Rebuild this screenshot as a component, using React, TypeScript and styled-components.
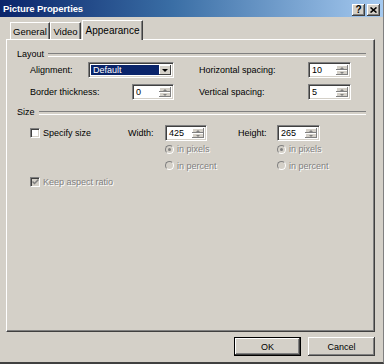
import React from "react";
import styled, { createGlobalStyle, css } from "styled-components";

const Global = createGlobalStyle`
  html, body { margin: 0; padding: 0; background: #d4d0c8; }
  body { font-family: "Liberation Sans", Arial, sans-serif; font-size: 9px; color: #000; }
  * { box-sizing: border-box; }
`;

const Window = styled.div`
  width: 384px;
  height: 364px;
  background: #d4d0c8;
  display: flex;
  flex-direction: column;
  border-right: 1px solid #808080;
  border-bottom: 2px solid #404040;
  overflow: hidden;
`;

const TitleBar = styled.div`
  height: 17px;
  flex: none;
  display: flex;
  align-items: center;
  justify-content: space-between;
  padding: 0 3px 0 3px;
  background: linear-gradient(to right, #0a246a 0%, #3a6ea5 45%, #a6caf0 100%);
`;

const Title = styled.span`
  color: #fff;
  font-weight: bold;
  font-size: 9.5px;
  letter-spacing: -0.1px;
`;

const TitleButtons = styled.div`
  display: flex;
  gap: 2px;
  margin-top: 2px;
`;

const CaptionButton = styled.div`
  width: 13px;
  height: 12px;
  background: #d4d0c8;
  box-shadow: inset -1px -1px #404040, inset 1px 1px #fff, inset -2px -2px #808080;
  display: flex;
  align-items: center;
  justify-content: center;
  font-weight: bold;
  font-size: 10px;
  line-height: 1;
  color: #000;
`;

const Body = styled.div`
  flex: 1;
  display: flex;
  flex-direction: column;
  padding: 3px 8px 0 6px;
`;

const TabRow = styled.div`
  height: 19px;
  display: flex;
  align-items: flex-end;
  padding-left: 4px;
  position: relative;
  z-index: 1;
`;

const Tab = styled.div<{ $active?: boolean; $w: number }>`
  width: ${(p) => p.$w}px;
  height: ${(p) => (p.$active ? 20 : 17)}px;
  margin-bottom: ${(p) => (p.$active ? -1 : 0)}px;
  margin-left: ${(p) => (p.$active ? 1 : 0)}px;
  background: #d4d0c8;
  border-top: 1px solid #fff;
  border-left: 1px solid #fff;
  border-right: 1px solid #404040;
  box-shadow: inset -1px 0 #808080;
  display: flex;
  align-items: center;
  justify-content: center;
  padding-top: ${(p) => (p.$active ? 0 : 1)}px;
  font-size: ${(p) => (p.$active ? 10 : 9.5)}px;
`;

const Panel = styled.div`
  height: 293px;
  background: #d4d0c8;
  border-top: 1px solid #fff;
  border-left: 1px solid #fff;
  border-right: 1px solid #404040;
  border-bottom: 1px solid #404040;
  box-shadow: inset -1px -1px #808080;
  padding: 8px 8px 0 10px;
  display: flex;
  flex-direction: column;
`;

const GroupHeader = styled.div<{ $mt?: number }>`
  height: 12px;
  margin-top: ${(p) => p.$mt ?? 0}px;
  display: flex;
  align-items: center;
  gap: 4px;
  &::after {
    content: "";
    flex: 1;
    height: 2px;
    border-top: 1px solid #808080;
    border-bottom: 1px solid #fff;
    margin-top: 1px;
  }
`;

const Row = styled.div<{ $mt?: number }>`
  height: 20px;
  margin-top: ${(p) => p.$mt ?? 0}px;
  display: flex;
  align-items: center;
  padding-left: 13px;
  gap: 25px;
`;

const Cell = styled.div<{ $w: number }>`
  width: ${(p) => p.$w}px;
  display: flex;
  align-items: center;
  justify-content: space-between;
`;

const Label = styled.span<{ $disabled?: boolean }>`
  white-space: nowrap;
  ${(p) =>
    p.$disabled &&
    css`
      color: #808080;
      text-shadow: 1px 1px 0 #fff;
    `}
`;

const Sunken = css`
  background: #fff;
  border-top: 1px solid #808080;
  border-left: 1px solid #808080;
  border-right: 1px solid #fff;
  border-bottom: 1px solid #fff;
  box-shadow: inset 1px 1px #404040, inset -1px -1px #d4d0c8;
`;

const Select = styled.div`
  ${Sunken};
  width: 86px;
  height: 16px;
  display: flex;
  padding: 2px;
`;

const SelectValue = styled.div`
  flex: 1;
  background: #0a246a;
  color: #fff;
  display: flex;
  align-items: center;
  padding-left: 2px;
  font-size: 9px;
`;

const SelectButton = styled.div`
  width: 12px;
  background: #d4d0c8;
  box-shadow: inset -1px -1px #404040, inset 1px 1px #fff;
  display: flex;
  align-items: center;
  justify-content: center;
  &::before {
    content: "";
    border-left: 3px solid transparent;
    border-right: 3px solid transparent;
    border-top: 3px solid #000;
  }
`;

const Spin = styled.div<{ $w: number }>`
  ${Sunken};
  width: ${(p) => p.$w}px;
  height: 16px;
  display: flex;
  padding: 2px;
`;

const SpinValue = styled.div`
  flex: 1;
  display: flex;
  align-items: center;
  padding-left: 1px;
  font-size: 9px;
`;

const SpinButtons = styled.div`
  width: 12px;
  display: flex;
  flex-direction: column;
`;

const SpinButton = styled.div<{ $up?: boolean }>`
  flex: 1;
  background: #d4d0c8;
  box-shadow: inset -1px -1px #808080, inset 1px 1px #fff;
  display: flex;
  align-items: center;
  justify-content: center;
  &::before {
    content: "";
    border-left: 2px solid transparent;
    border-right: 2px solid transparent;
    ${(p) =>
      p.$up
        ? css`border-bottom: 2px solid #808080;`
        : css`border-top: 2px solid #808080;`}
  }
`;

const SizeGrid = styled.div`
  margin-top: 7px;
  padding-left: 13px;
  display: grid;
  grid-template-columns: 98px 37px 73px 39px 1fr;
  grid-template-rows: 16px 16px 17px 15px;
  align-items: center;
`;

const GridItem = styled.div<{ $col: number; $row: number; $span?: number }>`
  grid-column: ${(p) => p.$col} / span ${(p) => p.$span ?? 1};
  grid-row: ${(p) => p.$row};
  display: flex;
  align-items: center;
  gap: 3px;
`;

const CheckBox = styled.div<{ $checked?: boolean; $disabled?: boolean }>`
  width: 10px;
  height: 10px;
  background: ${(p) => (p.$disabled ? "#d4d0c8" : "#fff")};
  border-top: 1px solid #808080;
  border-left: 1px solid #808080;
  border-right: 1px solid #fff;
  border-bottom: 1px solid #fff;
  box-shadow: inset 1px 1px #404040, inset -1px -1px #d4d0c8;
  display: flex;
  align-items: center;
  justify-content: center;
`;

const Radio = styled.div<{ $checked?: boolean }>`
  width: 9px;
  height: 9px;
  border-radius: 50%;
  background: #d4d0c8;
  border: 1px solid;
  border-color: #808080 #fff #fff #808080;
  display: flex;
  align-items: center;
  justify-content: center;
  &::before {
    content: "";
    width: 3px;
    height: 3px;
    border-radius: 50%;
    background: ${(p) => (p.$checked ? "#808080" : "transparent")};
  }
`;

const Footer = styled.div`
  display: flex;
  justify-content: flex-end;
  gap: 7px;
  padding-right: 0px;
  margin-top: 5px;
`;

const Button = styled.div<{ $default?: boolean }>`
  width: 67px;
  height: 19px;
  display: flex;
  align-items: center;
  justify-content: center;
  background: #d4d0c8;
  font-size: 9px;
  ${(p) =>
    p.$default
      ? css`
          border: 1px solid #000;
          box-shadow: inset -1px -1px #404040, inset 1px 1px #fff, inset -2px -2px #808080;
        `
      : css`
          box-shadow: inset -1px -1px #404040, inset 1px 1px #fff, inset -2px -2px #808080;
        `}
`;

function SpinBox({ value, w }: { value: string; w: number }) {
  return (
    <Spin $w={w}>
      <SpinValue>{value}</SpinValue>
      <SpinButtons>
        <SpinButton $up />
        <SpinButton />
      </SpinButtons>
    </Spin>
  );
}

export default function App() {
  return (
    <>
      <Global />
      <Window>
        <TitleBar>
          <Title>Picture Properties</Title>
          <TitleButtons>
            <CaptionButton>?</CaptionButton>
            <CaptionButton>
              <svg width="7" height="6" viewBox="0 0 7 6">
                <path d="M0.5 0.5 L6.5 5.5 M6.5 0.5 L0.5 5.5" stroke="#000" strokeWidth="1.6" />
              </svg>
            </CaptionButton>
          </TitleButtons>
        </TitleBar>
        <Body>
          <TabRow>
            <Tab $w={40}>General</Tab>
            <Tab $w={31}>Video</Tab>
            <Tab $w={61} $active>
              Appearance
            </Tab>
          </TabRow>
          <Panel>
            <GroupHeader>Layout</GroupHeader>
            <Row>
              <Cell $w={144}>
                <Label>Alignment:</Label>
                <Select>
                  <SelectValue>Default</SelectValue>
                  <SelectButton />
                </Select>
              </Cell>
              <Cell $w={152}>
                <Label>Horizontal spacing:</Label>
                <SpinBox value="10" w={43} />
              </Cell>
            </Row>
            <Row $mt={2}>
              <Cell $w={144}>
                <Label>Border thickness:</Label>
                <SpinBox value="0" w={42} />
              </Cell>
              <Cell $w={152}>
                <Label>Vertical spacing:</Label>
                <SpinBox value="5" w={43} />
              </Cell>
            </Row>
            <GroupHeader $mt={4}>Size</GroupHeader>
            <SizeGrid>
              <GridItem $col={1} $row={1}>
                <CheckBox />
                <Label>Specify size</Label>
              </GridItem>
              <GridItem $col={2} $row={1}>
                <Label>Width:</Label>
              </GridItem>
              <GridItem $col={3} $row={1}>
                <SpinBox value="425" w={42} />
              </GridItem>
              <GridItem $col={4} $row={1}>
                <Label>Height:</Label>
              </GridItem>
              <GridItem $col={5} $row={1}>
                <SpinBox value="265" w={43} />
              </GridItem>
              <GridItem $col={3} $row={2}>
                <Radio $checked />
                <Label $disabled>in pixels</Label>
              </GridItem>
              <GridItem $col={5} $row={2}>
                <Radio $checked />
                <Label $disabled>in pixels</Label>
              </GridItem>
              <GridItem $col={3} $row={3}>
                <Radio />
                <Label $disabled>in percent</Label>
              </GridItem>
              <GridItem $col={5} $row={3}>
                <Radio />
                <Label $disabled>in percent</Label>
              </GridItem>
              <GridItem $col={1} $row={4} $span={3}>
                <CheckBox $disabled>
                  <svg width="7" height="6" viewBox="0 0 7 6">
                    <path d="M0.5 2.5 L2.5 4.5 L6.5 0.5" stroke="#808080" strokeWidth="1.5" fill="none" />
                  </svg>
                </CheckBox>
                <Label $disabled>Keep aspect ratio</Label>
              </GridItem>
            </SizeGrid>
          </Panel>
          <Footer>
            <Button $default>OK</Button>
            <Button>Cancel</Button>
          </Footer>
        </Body>
      </Window>
    </>
  );
}
